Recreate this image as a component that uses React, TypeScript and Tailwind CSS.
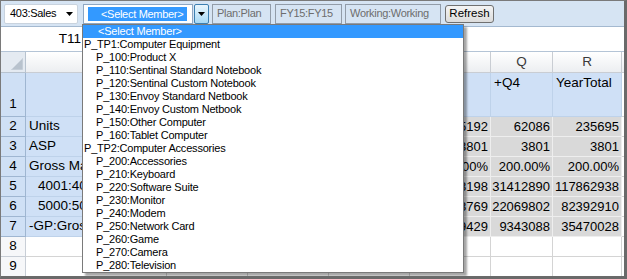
import React from "react";

type Col = { k: string; w: number; label: string };
const cols: Col[] = [
  { k: "A", w: 141, label: "A" },
  { k: "M", w: 81, label: "M" },
  { k: "N", w: 81, label: "N" },
  { k: "O", w: 81, label: "O" },
  { k: "P", w: 81, label: "P" },
  { k: "Q", w: 62, label: "Q" },
  { k: "R", w: 69, label: "R" },
  { k: "S", w: 70, label: "" },
];

const labels = ["Units", "ASP", "Gross Margin %", "4001:4001 Revenue", "5000:5000 COGS", "-GP:Gross Profit"];
const indent = [false, false, false, true, true, false];
const data: string[][] = [
  ["", "48211", "60206", "65192", "62086", "235695"],
  ["", "3801", "3801", "3801", "3801", "3801"],
  ["", "200.00%", "200.00%", "200.00%", "200.00%", "200.00%"],
  ["", "24390112", "29821638", "32238198", "31412890", "117862938"],
  ["", "17098331", "21456008", "21768769", "22069802", "82392910"],
  ["", "7291781", "8365630", "10469429", "9343088", "35470028"],
];
const header1 = ["", "+Q1", "+Q2", "+Q3", "", "+Q4", "YearTotal", ""];

const items: { t: string; ind: boolean }[] = [
  { t: "P_TP1:Computer Equipment", ind: false },
  { t: "P_100:Product X", ind: true },
  { t: "P_110:Sentinal Standard Notebook", ind: true },
  { t: "P_120:Sentinal Custom Notebook", ind: true },
  { t: "P_130:Envoy Standard Netbook", ind: true },
  { t: "P_140:Envoy Custom Netbook", ind: true },
  { t: "P_150:Other Computer", ind: true },
  { t: "P_160:Tablet Computer", ind: true },
  { t: "P_TP2:Computer Accessories", ind: false },
  { t: "P_200:Accessories", ind: true },
  { t: "P_210:Keyboard", ind: true },
  { t: "P_220:Software Suite", ind: true },
  { t: "P_230:Monitor", ind: true },
  { t: "P_240:Modem", ind: true },
  { t: "P_250:Network Card", ind: true },
  { t: "P_260:Game", ind: true },
  { t: "P_270:Camera", ind: true },
  { t: "P_280:Television", ind: true },
];

function Arrow() {
  return (
    <svg width="7" height="4" viewBox="0 0 7 4">
      <path d="M0 0h7L3.5 4z" fill="#000" />
    </svg>
  );
}

export default function App() {
  return (
    <div className="relative w-[627px] h-[279px] overflow-hidden bg-white border-l border-t border-[#7a7a7a] border-r-[3px] border-b-[3px] border-r-[#6a6a6a] border-b-[#6a6a6a] font-['Liberation_Sans',Arial,sans-serif]">
      {/* toolbar */}
      <div className="flex items-center h-[26px] bg-[#d6e4f3] border-b border-[#a4b9d0] pl-[3px] text-[11px] tracking-[-0.3px]">
        <div className="flex items-center justify-between w-[74px] h-[20px] bg-white border border-[#c9d3de] rounded-[2px] pl-[5px] pr-[4px] text-black">
          <span>403:Sales</span>
          <Arrow />
        </div>
        <div className="flex items-center ml-[5px] w-[110px] h-[20px] bg-white border border-[#8ea7c3] px-[4px]">
          <div className="w-[99px] h-[14px] bg-[#3399ff] text-white leading-[14px] pl-[13px]">&lt;Select Member&gt;</div>
        </div>
        <div className="flex items-center justify-center w-[15px] h-[20px] ml-[1px] rounded-[2px] border border-[#3c7fb1] bg-gradient-to-b from-[#eaf6fd] to-[#a7d9f5]">
          <Arrow />
        </div>
        <div className="flex items-center ml-[3px] w-[59px] h-[20px] border border-[#929ca8] pl-[4px] text-[#6d6d6d]">Plan:Plan</div>
        <div className="flex items-center ml-[4px] w-[67px] h-[20px] border border-[#929ca8] pl-[4px] text-[#6d6d6d]">FY15:FY15</div>
        <div className="flex items-center ml-[3px] w-[96px] h-[20px] border border-[#929ca8] pl-[4px] text-[#6d6d6d]">Working:Working</div>
        <div className="flex items-center justify-center ml-[4px] w-[49px] h-[18px] rounded-[3px] border border-[#707070] bg-gradient-to-b from-[#f4f4f4] to-[#dcdcdc] text-black text-[11.5px] tracking-normal">Refresh</div>
      </div>

      {/* formula row */}
      <div className="flex items-center h-[25px] border-b border-[#b4c4d6] bg-white">
        <div className="w-[80px] text-right text-[13.5px] text-black">T11</div>
      </div>

      {/* grid */}
      <div className="text-[13px] text-black">
        {/* column header row */}
        <div className="flex h-[21px]">
          <div className="relative w-[25px] shrink-0 bg-[#e4eaf1] border-r border-b border-[#b8c3cf]">
            <svg className="absolute right-[2px] bottom-[2px]" width="12" height="12" viewBox="0 0 12 12">
              <path d="M12 0V12H0z" fill="#b8c2cd" />
              <path d="M12 1V12H1" fill="none" stroke="#d7dde4" strokeWidth="0.8" />
            </svg>
          </div>
          {cols.map((c) => (
            <div
              key={c.k}
              style={{ width: c.w }}
              className="shrink-0 flex items-center justify-center bg-gradient-to-b from-[#ffffff] to-[#eceef1] border-r border-b border-[#c9cdd3] text-[#3a3a3a] text-[13.5px]"
            >
              {c.label}
            </div>
          ))}
        </div>
        {/* row 1 */}
        <div className="flex h-[44px]">
          <div className="w-[25px] shrink-0 flex items-end justify-center pb-[2px] bg-[#cfe0f5] border-r border-b border-[#9fb6d1] text-[13.5px]">1</div>
          {cols.map((c, i) => (
            <div
              key={c.k}
              style={{ width: c.w }}
              className={
                i < 7
                  ? "shrink-0 bg-[#cfe0f6] border-r border-b border-[#bed2ea] pl-[3px] pt-[1px] leading-[18px] whitespace-nowrap overflow-hidden text-[13.5px]"
                  : "shrink-0 bg-white border-r border-b border-[#d4d4d4]"
              }
            >
              {header1[i]}
            </div>
          ))}
        </div>
        {/* rows 2-7 */}
        {labels.map((l, r) => (
          <div key={r} className="flex h-[20px]">
            <div className="w-[25px] shrink-0 flex items-center justify-center bg-[#cfe0f5] border-r border-b border-[#9fb6d1] text-[13.5px]">{r + 2}</div>
            <div
              style={{ width: cols[0].w }}
              className={`shrink-0 flex items-center bg-[#cfe0f6] border-r border-b border-[#bed2ea] whitespace-nowrap overflow-hidden text-[13.5px] ${indent[r] ? "pl-[12px]" : "pl-[3px]"}`}
            >
              {l}
            </div>
            {cols.slice(1).map((c, i) => (
              <div
                key={c.k}
                style={{ width: c.w }}
                className={
                  i < 6
                    ? "shrink-0 flex items-center justify-end pr-[2px] bg-[#d9d9d9] border-r border-b border-[#eeeeee] whitespace-nowrap overflow-hidden"
                    : "shrink-0 bg-white border-r border-b border-[#d4d4d4]"
                }
              >
                {i < 6 ? data[r][i] : ""}
              </div>
            ))}
          </div>
        ))}
        {/* rows 8-9 */}
        {[8, 9].map((n) => (
          <div key={n} className="flex h-[20px]">
            <div className="w-[25px] shrink-0 flex items-center justify-center bg-[#f6f7f9] border-r border-b border-[#c8ced6] text-[13.5px]">{n}</div>
            {cols.map((c) => (
              <div key={c.k} style={{ width: c.w }} className="shrink-0 bg-white border-r border-b border-[#d4d4d4]" />
            ))}
          </div>
        ))}
      </div>

      {/* open dropdown list */}
      <div className="absolute left-[81px] top-[23px] w-[382px] bg-white border border-[#7a7a7a] shadow-[3px_3px_2px_rgba(0,0,0,0.35)] text-[11px] tracking-[-0.2px] text-black">
        <div className="h-[13px] leading-[13px] bg-[#3399ff] text-white pl-[15px]">&lt;Select Member&gt;</div>
        {items.map((it) => (
          <div key={it.t} className={`h-[13px] leading-[13px] whitespace-nowrap ${it.ind ? "pl-[13px]" : "pl-[1px]"}`}>
            {it.t}
          </div>
        ))}
      </div>
    </div>
  );
}
